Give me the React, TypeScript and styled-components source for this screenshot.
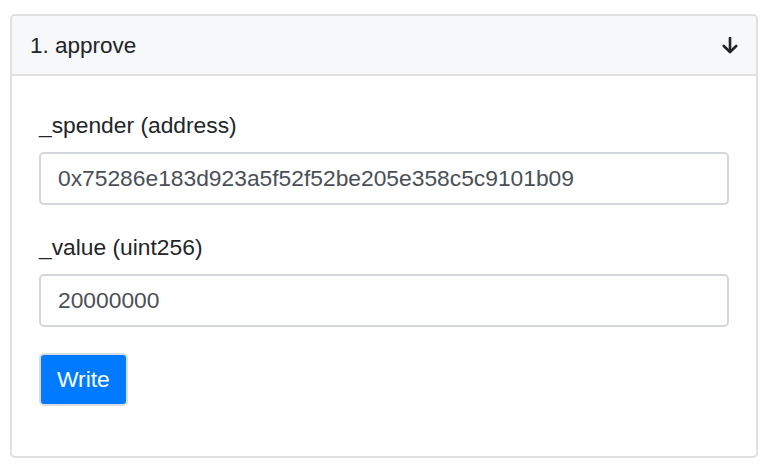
import React from "react";
import styled, { createGlobalStyle } from "styled-components";

const GlobalStyle = createGlobalStyle`
  html, body {
    margin: 0;
    padding: 0;
    background: #ffffff;
  }
  body {
    font-family: "Liberation Sans", Arial, sans-serif;
    color: #212529;
  }
  * { box-sizing: border-box; }
`;

const Page = styled.div`
  padding: 14px 11px 10px 10px;
`;

const Card = styled.section`
  width: 748px;
  border: 2px solid #e0e0e0;
  border-radius: 5px;
  background: #ffffff;
  overflow: hidden;
`;

const CardHeader = styled.header`
  height: 60px;
  display: flex;
  align-items: center;
  justify-content: space-between;
  padding: 0 18px 0 18px;
  background: #f7f8f9;
  border-bottom: 2px solid #e0e0e0;
  font-size: 22.5px;
  line-height: 33px;
  color: #212529;
`;

const CardBody = styled.div`
  padding: 33px 27px 50px 27px;
`;

const FormGroup = styled.div`
  margin-bottom: 26px;
`;

const Label = styled.label`
  display: block;
  font-size: 22.8px;
  line-height: 33px;
  margin-bottom: 10px;
  color: #212529;
`;

const Input = styled.input`
  display: block;
  width: 100%;
  height: 53px;
  padding: 0 17px;
  border: 2px solid #d3d7dc;
  border-radius: 5px;
  font-family: "Liberation Sans", Arial, sans-serif;
  font-size: 22.8px;
  color: #495057;
  background: #ffffff;
  outline: none;
`;

const Button = styled.button`
  height: 53px;
  padding: 0 16px;
  border: 2px solid #d9dde2;
  border-radius: 5px;
  background: #007bff;
  color: #ffffff;
  font-family: "Liberation Sans", Arial, sans-serif;
  font-size: 22.8px;
  line-height: 33px;
  cursor: pointer;
`;

const ArrowIcon = styled.svg`
  display: block;
  width: 16px;
  height: 17px;
`;

export default function App() {
  return (
    <>
      <GlobalStyle />
      <Page>
        <Card>
          <CardHeader>
            <span>1. approve</span>
            <ArrowIcon viewBox="0 0 16 17" fill="none">
              <path d="M8 1 V15" stroke="#212529" strokeWidth="2.6" strokeLinecap="round" />
              <path d="M1.8 9 L8 15 L14.2 9" stroke="#212529" strokeWidth="2.6" strokeLinecap="round" strokeLinejoin="round" />
            </ArrowIcon>
          </CardHeader>
          <CardBody>
            <FormGroup>
              <Label>_spender (address)</Label>
              <Input defaultValue="0x75286e183d923a5f52f52be205e358c5c9101b09" />
            </FormGroup>
            <FormGroup>
              <Label>_value (uint256)</Label>
              <Input defaultValue="20000000" />
            </FormGroup>
            <Button type="button">Write</Button>
          </CardBody>
        </Card>
      </Page>
    </>
  );
}
